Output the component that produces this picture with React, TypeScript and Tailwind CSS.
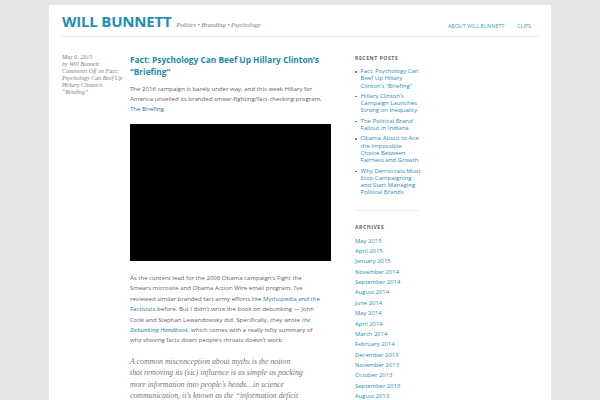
import React from 'react'

const SANS = { fontFamily: "'Open Sans', 'Liberation Sans', sans-serif" }
const SERIF = { fontFamily: "'Liberation Serif', 'DejaVu Serif', serif" }

const RECENT = [
  ['Fact: Psychology Can', 'Beef Up Hillary', 'Clinton’s “Briefing”'],
  ['Hillary Clinton’s', 'Campaign Launches', 'Strong on Inequality'],
  ['The Political Brand', 'Fallout in Indiana'],
  ['Obama About to Ace', 'the Impossible', 'Choice Between', 'Fairness and Growth'],
  ['Why Democrats Must', 'Stop Campaigning', 'and Start Managing', 'Political Brands'],
]

const ARCHIVES = [
  'May 2015', 'April 2015', 'January 2015', 'November 2014', 'September 2014',
  'August 2014', 'June 2014', 'May 2014', 'April 2014', 'March 2014',
  'February 2014', 'December 2013', 'November 2013', 'October 2013',
  'September 2013', 'August 2013',
]

function Lines({ lines }: { lines: React.ReactNode[] }) {
  return (
    <>
      {lines.map((l, i) => (
        <span key={i} className="block whitespace-nowrap">{l}</span>
      ))}
    </>
  )
}

export default function App() {
  return (
    <div className="min-h-[400px] w-[600px] overflow-hidden bg-[#e6e6e6] pt-[5px]" style={SANS}>
      <div className="mx-auto h-[395px] w-[502px] overflow-hidden bg-white px-[13px]">
        {/* header */}
        <header className="flex h-[32px] items-end justify-between border-b border-[#ededed] pb-[6px]">
          <div className="flex items-baseline gap-[5px]">
            <span className="text-[15px] font-bold leading-none tracking-[-0.2px] text-[#1f8db3]">WILL BUNNETT</span>
            <span className="text-[6.4px] italic text-[#7a7a7a]" style={SERIF}>Politics • Branding • Psychology</span>
          </div>
          <nav className="flex gap-[13px] pb-[1px] pr-[7px] text-[5.3px] leading-none text-[#3b9cc0]">
            <span>ABOUT WILL BUNNETT</span>
            <span>CLIPS</span>
          </nav>
        </header>

        <div className="flex pt-[17px]">
          {/* meta */}
          <div className="w-[68px] shrink-0 text-[6px] italic leading-[7px] text-[#808080]" style={SERIF}>
            <Lines lines={['May 6, 2015', 'by Will Bunnett', 'Comments Off on Fact:', 'Psychology Can Beef Up', 'Hillary Clinton’s', '“Briefing”']} />
          </div>

          {/* main */}
          <main className="w-[201px] shrink-0">
            <h1 className="text-[8.35px] font-bold leading-[12px] text-[#2389ad]">
              <Lines lines={['Fact: Psychology Can Beef Up Hillary Clinton’s', '“Briefing”']} />
            </h1>
            <p className="mt-[6px] text-[6.05px] leading-[10px] text-[#636363]">
              <Lines lines={[
                'The 2016 campaign is barely under way, and this week Hillary for',
                'America unveiled its branded smear-fighting/fact-checking program,',
                <span className="text-[#21759b]">The Briefing.</span>,
              ]} />
            </p>
            <div className="mt-[10px] h-[137px] w-[201px] bg-black" />
            <p className="mt-[12px] text-[6.05px] leading-[10.4px] text-[#636363]">
              <Lines lines={[
                'As the content lead for the 2008 Obama campaign’s Fight the',
                'Smears microsite and Obama Action Wire email program, I’ve',
                <>reviewed similar branded fact-army efforts like <span className="text-[#1f7fa8]">Mythopedia and the</span></>,
                <><span className="text-[#1f7fa8]">Factivists</span> before. But I didn’t write the book on debunking — John</>,
                <>Cook and Stephan Lewandowsky did. Specifically, they wrote <i className="text-[#1f7fa8]">the</i></>,
                <><i className="text-[#1f7fa8]">Debunking Handbook</i>, which comes with a really nifty summary of</>,
                'why shoving facts down people’s throats doesn’t work:',
              ]} />
            </p>
            <blockquote className="mt-[10px] text-[7.8px] italic leading-[11.5px] text-[#777]" style={SERIF}>
              <Lines lines={[
                'A common misconception about myths is the notion',
                'that removing its (sic) influence is as simple as packing',
                'more information into people’s heads…in science',
                'communication, it’s known as the “information deficit',
              ]} />
            </blockquote>
          </main>

          {/* sidebar */}
          <aside className="ml-[24px] w-[64px] shrink-0">
            <h3 className="text-[5.2px] font-bold uppercase leading-[8px] tracking-[0.5px] text-[#666]">Recent Posts</h3>
            <ul className="mt-[6px] flex flex-col gap-[3px] border-b border-[#ededed] pb-[13px]">
              {RECENT.map((lines, i) => (
                <li key={i} className="flex text-[6px] leading-[7.3px] text-[#2a8db3]">
                  <span className="mt-[3px] mr-[4px] h-[1.6px] w-[1.6px] shrink-0 bg-[#777]" />
                  <span><Lines lines={lines} /></span>
                </li>
              ))}
            </ul>
            <h3 className="mt-[12px] text-[5.2px] font-bold uppercase leading-[8px] tracking-[0.5px] text-[#666]">Archives</h3>
            <ul className="mt-[5px]">
              {ARCHIVES.map(a => (
                <li key={a} className="whitespace-nowrap text-[5.9px] leading-[10.35px] text-[#2a8db3]">{a}</li>
              ))}
            </ul>
          </aside>
        </div>
      </div>
    </div>
  )
}
